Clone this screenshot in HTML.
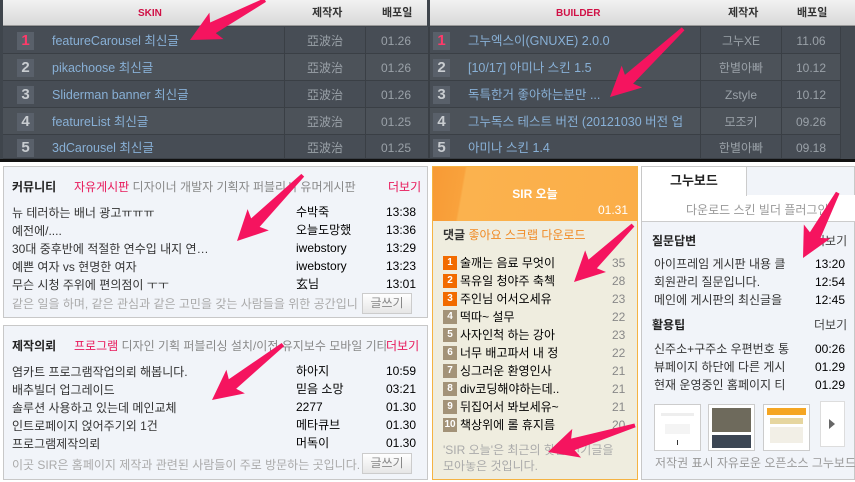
<!DOCTYPE html>
<html><head><meta charset="utf-8"><style>
*{margin:0;padding:0;box-sizing:border-box}
body{width:855px;height:482px;overflow:hidden;background:#fff;font-family:"Liberation Sans","Noto Sans CJK KR",sans-serif;font-size:12px;position:relative}
.a{position:absolute;white-space:nowrap;line-height:14px}
.top{position:absolute;left:0;top:0;width:855px;height:162px;background:#3f454c}
.hd{position:absolute;top:0;height:26px;background:linear-gradient(#f2f2f2,#d9d9d9);border-bottom:1px solid #999}
.row{position:absolute;height:27px;border-bottom:1px solid #3a3f45}
.nb{position:absolute;width:17px;height:18px;background:#59606a;color:#c8ccd0;font-weight:bold;font-size:15px;text-align:center;line-height:18px}
.bt{color:#88b0d6;font-size:12.5px}
.au{color:#9aa1a8;text-align:center}
.box{position:absolute;background:#f1f4f9;border:1px solid #c8c8c8}
.gr{color:#888}
.red{color:#e8185a}
.btn{position:absolute;width:50px;height:21px;border:1px solid #ccc;background:linear-gradient(#fff,#e6e6e6);color:#888;text-align:center;line-height:19px}
.sq{position:absolute;width:14px;height:14px;color:#fff;font-size:10px;font-weight:bold;text-align:center;line-height:14px}
</style></head><body>
<div class="top">
<div class="hd" style="left:3px;width:424px"></div>
<div class="hd" style="left:430px;width:425px"></div>
<div class="a red" style="left:138px;top:7px;font-size:10px;font-weight:bold;color:#d01045">SKIN</div>
<div class="a" style="left:312px;top:6px;font-size:11px;font-weight:bold;color:#333">제작자</div>
<div class="a" style="left:382px;top:6px;font-size:11px;font-weight:bold;color:#333">배포일</div>
<div class="a" style="left:556px;top:7px;font-size:10px;font-weight:bold;color:#d01045">BUILDER</div>
<div class="a" style="left:728px;top:6px;font-size:11px;font-weight:bold;color:#333">제작자</div>
<div class="a" style="left:797px;top:6px;font-size:11px;font-weight:bold;color:#333">배포일</div>
<div class="row" style="left:3px;top:27px;width:852px;background:#474d55"></div>
<div class="row" style="left:3px;top:54px;width:852px;background:#4c5259"></div>
<div class="row" style="left:3px;top:81px;width:852px;background:#474d55"></div>
<div class="row" style="left:3px;top:108px;width:852px;background:#4c5259"></div>
<div class="row" style="left:3px;top:135px;width:852px;height:24px;background:#474d55"></div>
<div style="position:absolute;left:284px;top:27px;width:1px;height:132px;background:#3a3f45"></div>
<div style="position:absolute;left:365px;top:27px;width:1px;height:132px;background:#3a3f45"></div>
<div style="position:absolute;left:428px;top:27px;width:2px;height:132px;background:#3a3f45"></div>
<div style="position:absolute;left:700px;top:27px;width:1px;height:132px;background:#3a3f45"></div>
<div style="position:absolute;left:781px;top:27px;width:1px;height:132px;background:#3a3f45"></div>
<div style="position:absolute;left:840px;top:27px;width:15px;height:132px;background:#444a51;border-left:1px solid #3a3f45"></div>
<div style="position:absolute;left:0;top:159px;width:855px;height:3px;background:#111"></div>
</div>
<!-- left rows -->
<div class="nb" style="left:17px;top:32px;color:#ff3a6a">1</div><div class="a bt" style="left:52px;top:34px">featureCarousel 최신글</div><div class="a au" style="left:285px;top:34px;width:80px">亞波治</div><div class="a au" style="left:366px;top:34px;width:60px">01.26</div>
<div class="nb" style="left:17px;top:59px">2</div><div class="a bt" style="left:52px;top:61px">pikachoose 최신글</div><div class="a au" style="left:285px;top:61px;width:80px">亞波治</div><div class="a au" style="left:366px;top:61px;width:60px">01.26</div>
<div class="nb" style="left:17px;top:86px">3</div><div class="a bt" style="left:52px;top:88px">Sliderman banner 최신글</div><div class="a au" style="left:285px;top:88px;width:80px">亞波治</div><div class="a au" style="left:366px;top:88px;width:60px">01.26</div>
<div class="nb" style="left:17px;top:113px">4</div><div class="a bt" style="left:52px;top:115px">featureList 최신글</div><div class="a au" style="left:285px;top:115px;width:80px">亞波治</div><div class="a au" style="left:366px;top:115px;width:60px">01.25</div>
<div class="nb" style="left:17px;top:139px">5</div><div class="a bt" style="left:52px;top:141px">3dCarousel 최신글</div><div class="a au" style="left:285px;top:141px;width:80px">亞波治</div><div class="a au" style="left:366px;top:141px;width:60px">01.25</div>
<!-- right rows -->
<div class="nb" style="left:433px;top:32px;color:#ff3a6a">1</div><div class="a bt" style="left:468px;top:34px">그누엑스이(GNUXE) 2.0.0</div><div class="a au" style="left:701px;top:34px;width:80px">그누XE</div><div class="a au" style="left:782px;top:34px;width:58px">11.06</div>
<div class="nb" style="left:433px;top:59px">2</div><div class="a bt" style="left:468px;top:61px">[10/17] 아미나 스킨 1.5</div><div class="a au" style="left:701px;top:61px;width:80px">한별아빠</div><div class="a au" style="left:782px;top:61px;width:58px">10.12</div>
<div class="nb" style="left:433px;top:86px">3</div><div class="a bt" style="left:468px;top:88px">독특한거 좋아하는분만 ...</div><div class="a au" style="left:701px;top:88px;width:80px">Zstyle</div><div class="a au" style="left:782px;top:88px;width:58px">10.12</div>
<div class="nb" style="left:433px;top:113px">4</div><div class="a bt" style="left:468px;top:115px">그누독스 테스트 버전 (20121030 버전 업</div><div class="a au" style="left:701px;top:115px;width:80px">모조키</div><div class="a au" style="left:782px;top:115px;width:58px">09.26</div>
<div class="nb" style="left:433px;top:139px">5</div><div class="a bt" style="left:468px;top:141px">아미나 스킨 1.4</div><div class="a au" style="left:701px;top:141px;width:80px">한별아빠</div><div class="a au" style="left:782px;top:141px;width:58px">09.18</div>

<!-- community -->
<div class="box" style="left:3px;top:166px;width:425px;height:152px"></div>
<div class="a" style="left:12px;top:180px;font-weight:bold;color:#222">커뮤니티</div>
<div class="a gr" style="left:74px;top:180px"><span class="red">자유게시판</span> 디자이너 개발자 기획자 퍼블리셔 유머게시판</div>
<div class="a red" style="left:388px;top:180px">더보기</div>
<div class="a" style="left:12px;top:206px;color:#333">뉴 테러하는 배너 광고ㅠㅠㅠ</div><div class="a" style="left:296px;top:205px">수박죽</div><div class="a" style="left:386px;top:205px">13:38</div>
<div class="a" style="left:12px;top:224px;color:#333">예전에/....</div><div class="a" style="left:296px;top:223px">오늘도망했</div><div class="a" style="left:386px;top:223px">13:36</div>
<div class="a" style="left:12px;top:242px;color:#333">30대 중후반에 적절한 연수입 내지 연…</div><div class="a" style="left:296px;top:241px">iwebstory</div><div class="a" style="left:386px;top:241px">13:29</div>
<div class="a" style="left:12px;top:260px;color:#333">예쁜 여자 vs 현명한 여자</div><div class="a" style="left:296px;top:259px">iwebstory</div><div class="a" style="left:386px;top:259px">13:23</div>
<div class="a" style="left:12px;top:278px;color:#333">무슨 시청 주위에 편의점이 ㅜㅜ</div><div class="a" style="left:296px;top:277px">玄님</div><div class="a" style="left:386px;top:277px">13:01</div>
<div class="a" style="left:12px;top:297px;color:#aaa">같은 일을 하며, 같은 관심과 같은 고민을 갖는 사람들을 위한 공간입니</div>
<div class="btn" style="left:362px;top:293px">글쓰기</div>

<!-- 제작의뢰 -->
<div class="box" style="left:3px;top:325px;width:425px;height:155px"></div>
<div class="a" style="left:12px;top:339px;font-weight:bold;color:#222">제작의뢰</div>
<div class="a gr" style="left:74px;top:339px"><span class="red">프로그램</span> 디자인 기획 퍼블리싱 설치/이전 유지보수 모바일 기타</div>
<div class="a red" style="left:386px;top:339px;background:#f1f4f9">더보기</div>
<div class="a" style="left:12px;top:365px;color:#333">염카트 프로그램작업의뢰 해봅니다.</div><div class="a" style="left:296px;top:364px">하아지</div><div class="a" style="left:386px;top:364px">10:59</div>
<div class="a" style="left:12px;top:383px;color:#333">배추빌더 업그레이드</div><div class="a" style="left:296px;top:382px">믿음 소망</div><div class="a" style="left:386px;top:382px">03:21</div>
<div class="a" style="left:12px;top:401px;color:#333">솔루션 사용하고 있는데 메인교체</div><div class="a" style="left:296px;top:400px">2277</div><div class="a" style="left:386px;top:400px">01.30</div>
<div class="a" style="left:12px;top:419px;color:#333">인트로페이지 얹어주기외 1건</div><div class="a" style="left:296px;top:418px">메타큐브</div><div class="a" style="left:386px;top:418px">01.30</div>
<div class="a" style="left:12px;top:437px;color:#333">프로그램제작의뢰</div><div class="a" style="left:296px;top:436px">머독이</div><div class="a" style="left:386px;top:436px">01.30</div>
<div class="a" style="left:12px;top:458px;color:#aaa">이곳 SIR은 홈페이지 제작과 관련된 사람들이 주로 방문하는 곳입니다.</div>
<div class="btn" style="left:362px;top:453px">글쓰기</div>

<!-- SIR today -->
<div style="position:absolute;left:432px;top:166px;width:206px;height:314px;background:#efeddf;border:1px solid #f5b342"></div>
<div style="position:absolute;left:433px;top:167px;width:204px;height:54px;background:linear-gradient(100deg,#f79a35 0%,#f9a23c 15%,#fbb24e 16%,#fbae48 100%)"></div>
<div class="a" style="left:433px;top:187px;width:204px;text-align:center;color:#fff;font-weight:bold">SIR 오늘</div>
<div class="a" style="left:598px;top:203px;color:#fff">01.31</div>
<div class="a" style="left:443px;top:228px"><b style="color:#333">댓글</b> <span style="color:#f08a24">좋아요 스크랩 다운로드</span></div>
<div class="sq" style="left:443px;top:256px;background:#f26b00">1</div><div class="a" style="left:460px;top:256px">술깨는 음료 무엇이</div><div class="a gr" style="left:612px;top:256px">35</div>
<div class="sq" style="left:443px;top:274px;background:#f26b00">2</div><div class="a" style="left:460px;top:274px">목유일 청야주 축첵</div><div class="a gr" style="left:612px;top:274px">28</div>
<div class="sq" style="left:443px;top:292px;background:#f26b00">3</div><div class="a" style="left:460px;top:292px">주인님 어서오세유</div><div class="a gr" style="left:612px;top:292px">23</div>
<div class="sq" style="left:443px;top:310px;background:#a39378">4</div><div class="a" style="left:460px;top:310px">떡따~ 설무</div><div class="a gr" style="left:612px;top:310px">22</div>
<div class="sq" style="left:443px;top:328px;background:#a39378">5</div><div class="a" style="left:460px;top:328px">사자인척 하는 강아</div><div class="a gr" style="left:612px;top:328px">23</div>
<div class="sq" style="left:443px;top:346px;background:#a39378">6</div><div class="a" style="left:460px;top:346px">너무 배고파서 내 정</div><div class="a gr" style="left:612px;top:346px">22</div>
<div class="sq" style="left:443px;top:364px;background:#a39378">7</div><div class="a" style="left:460px;top:364px">싱그러운 환영인사</div><div class="a gr" style="left:612px;top:364px">21</div>
<div class="sq" style="left:443px;top:382px;background:#a39378">8</div><div class="a" style="left:460px;top:382px">div코딩해야하는데..</div><div class="a gr" style="left:612px;top:382px">21</div>
<div class="sq" style="left:443px;top:400px;background:#a39378">9</div><div class="a" style="left:460px;top:400px">뒤집어서 봐보세유~</div><div class="a gr" style="left:612px;top:400px">21</div>
<div class="sq" style="left:443px;top:418px;background:#a39378">10</div><div class="a" style="left:460px;top:418px">책상위에 롤 휴지름</div><div class="a gr" style="left:612px;top:418px">20</div>
<div class="a" style="left:443px;top:443px;color:#aaa">'SIR 오늘'은 최근의 핫한 인기글을</div>
<div class="a" style="left:443px;top:459px;color:#aaa">모아놓은 것입니다.</div>

<!-- right panel -->
<div class="box" style="left:641px;top:166px;width:214px;height:314px"></div>
<div style="position:absolute;left:642px;top:195px;width:213px;height:27px;background:#fff;border-bottom:1px solid #ccc"></div>
<div style="position:absolute;left:642px;top:167px;width:105px;height:29px;background:#fff;border-right:1px solid #ccc"></div>
<div class="a" style="left:670px;top:174px;font-weight:bold;font-size:13px;color:#222">그누보드</div>
<div class="a" style="left:686px;top:203px;color:#999">다운로드 스킨 빌더 플러그인</div>
<div class="a" style="left:652px;top:234px;font-weight:bold;color:#222">질문답변</div>
<div class="a" style="left:814px;top:234px;color:#444">더보기</div>
<div class="a" style="left:654px;top:257px;color:#333">아이프레임 게시판 내용 클</div><div class="a" style="left:815px;top:257px">13:20</div>
<div class="a" style="left:654px;top:275px;color:#333">회원관리 질문입니다.</div><div class="a" style="left:815px;top:275px">12:54</div>
<div class="a" style="left:654px;top:293px;color:#333">메인에 게시판의 최신글을</div><div class="a" style="left:815px;top:293px">12:45</div>
<div class="a" style="left:652px;top:318px;font-weight:bold;color:#222">활용팁</div>
<div class="a" style="left:814px;top:318px;color:#444">더보기</div>
<div class="a" style="left:654px;top:342px;color:#333">신주소+구주소 우편번호 통</div><div class="a" style="left:815px;top:342px">00:26</div>
<div class="a" style="left:654px;top:360px;color:#333">뷰페이지 하단에 다른 게시</div><div class="a" style="left:815px;top:360px">01.29</div>
<div class="a" style="left:654px;top:378px;color:#333">현재 운영중인 홈페이지 티</div><div class="a" style="left:815px;top:378px">01.29</div>
<div style="position:absolute;left:654px;top:404px;width:47px;height:47px;border:1px solid #ccc;background:#fff"><div style="margin:8px 6px;height:3px;background:#eee"></div><div style="margin:4px 10px;height:10px;background:#f4f4f4"></div><div style="margin:6px 22px 0;height:5px;background:#333"></div></div>
<div style="position:absolute;left:708px;top:404px;width:47px;height:47px;border:1px solid #ccc;background:#fff"><div style="margin:3px;height:24px;background:#6e6a5c"></div><div style="margin:0 3px;height:13px;background:#3c4654"></div></div>
<div style="position:absolute;left:763px;top:404px;width:47px;height:47px;border:1px solid #ccc;background:#fff"><div style="margin:3px;height:7px;background:#f5a623"></div><div style="margin:2px 6px;height:6px;background:#e6d6a0"></div><div style="margin:3px 6px;height:16px;background:#f2efe6"></div></div>
<div style="position:absolute;left:820px;top:401px;width:25px;height:46px;border:1px solid #ddd;background:#fff"></div>
<div style="position:absolute;left:829px;top:419px;border-left:6px solid #666;border-top:5px solid transparent;border-bottom:5px solid transparent"></div>
<div class="a" style="left:655px;top:456px;color:#999">저작권 표시 자유로운 오픈소스 그누보드</div>

<svg style="position:absolute;left:0;top:0" width="855" height="482">
<defs><g id="ar"><polygon points="-1,-2 -26,-6 -30,-15 0,0 -30,15 -26,6 -1,2" fill="#f5145f"/></g></defs>
<g fill="#f5145f">
<g transform="translate(190,40) rotate(152)"><polygon points="-85,-2 -26,-6 -30,-15 0,0 -30,15 -26,6 -85,2"/></g>
<g transform="translate(610,97) rotate(137)"><polygon points="-100,-2 -26,-6 -30,-15 0,0 -30,15 -26,6 -100,2"/></g>
<g transform="translate(237,241) rotate(135)"><polygon points="-93,-2 -26,-6 -30,-15 0,0 -30,15 -26,6 -93,2"/></g>
<g transform="translate(212,400) rotate(142)"><polygon points="-90,-2 -26,-6 -30,-15 0,0 -30,15 -26,6 -90,2"/></g>
<g transform="translate(574,282) rotate(136)"><polygon points="-82,-2 -26,-6 -30,-15 0,0 -30,15 -26,6 -82,2"/></g>
<g transform="translate(548,452) rotate(163)"><polygon points="-91,-2 -26,-6 -30,-15 0,0 -30,15 -26,6 -91,2"/></g>
<g transform="translate(803,258) rotate(118)"><polygon points="-74,-2 -26,-6 -30,-15 0,0 -30,15 -26,6 -74,2"/></g>
</g>
</svg>
</body></html>
